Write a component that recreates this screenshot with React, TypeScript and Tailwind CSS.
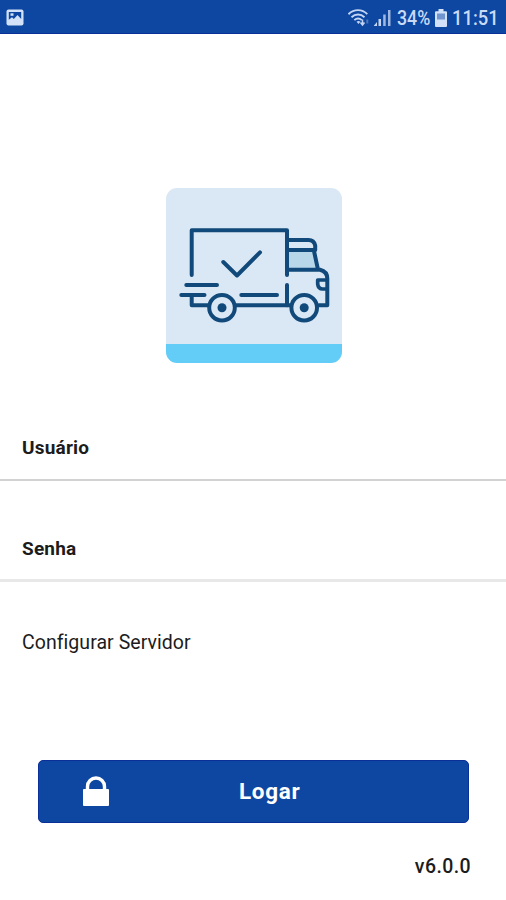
function PictureIcon() {
  return (
    <svg width="18" height="17" viewBox="0 0 18 17" fill="none">
      <rect x="0.5" y="0.5" width="17" height="16" rx="2" fill="#d3e1f8" />
      <path d="M2.8 3h12.400v7l-3.700-4-3.700 4L6 8.300l-3.200 2.500z" fill="#0d47a1" />
      <rect x="4.5" y="4.3" width="3" height="2.5" fill="#d3e1f8" />
    </svg>
  );
}

function WifiIcon() {
  return (
    <svg width="24" height="20" viewBox="0 0 24 20" fill="none" stroke="#c3d5f3" strokeWidth="1.9">
      <path d="M0.5 6.200C6 .8 14 .8 19.300 6.200" />
      <path d="M3.5 9.200c3.800-3.600 9.200-3.600 13 0" />
      <path d="M6.3 12.100c2.300-2.100 5.200-2.100 7.500 0" />
      <path d="M8.5 13.800c1.300-1.100 2.700-1.100 4 0l-2 2.200z" fill="#c3d5f3" stroke="none" />
      <path d="M14.5 11.500v5M12.500 14.500l2 2.500 2-2.500" strokeWidth="1.5" />
      <path d="M19.3 15.500v-4" strokeWidth="2" opacity=".35" />
    </svg>
  );
}

function SignalIcon() {
  return (
    <svg width="18" height="18" viewBox="0 0 18 18" fill="#c3d5f3">
      <path d="M-.5 17L3 13v4z" />
      <rect x="4.5" y="10" width="2.5" height="7" />
      <rect x="9.2" y="5.5" width="2.5" height="11.5" opacity=".8" />
      <rect x="14" y="1" width="2.5" height="16" opacity=".8" />
    </svg>
  );
}

function BatteryIcon() {
  return (
    <svg width="12" height="18" viewBox="0 0 12 18">
      <path d="M3.5 0h5v2.200H11a1 1 0 0 1 1 1V17a1 1 0 0 1-1 1H1a1 1 0 0 1-1-1V3.200a1 1 0 0 1 1-1h2.500z" fill="#d3e1f8" />
      <rect x="2" y="4.5" width="8" height="6" fill="#6f94cf" />
    </svg>
  );
}

function TruckIcon() {
  return (
    <svg
      width="176"
      height="175"
      viewBox="0 0 176 175"
      fill="none"
      stroke="#114a7a"
      strokeWidth="4"
      strokeLinecap="round"
      strokeLinejoin="round"
    >
      {/* cab */}
      <path d="M121 62h27l4 19.700h-31z" fill="#b8d8ea" stroke="none" />
      <path d="M121 52h21.500q5.500 0 6.700 5.500V62H121" />
      <path d="M148 63l4 18.700M121 81.700h33q7.300 1.800 7.300 8.800v26.800H153" />
      <path d="M161 92h-9.300v4q.5 5 5 5h4.300" strokeWidth="3.7" />

      {/* cargo box */}
      <path d="M25.7 87V42.300H121V87" />
      <path d="M121 97v20.300" />
      <path d="M25.7 109v8.300H43M69 117.300h56" />
      <path d="M57.3 74L71 87.500 94 64.300" />

      {/* speed lines */}
      <path d="M20.3 97H51M15.300 107h23.200M75.300 107H111" />

      {/* wheels */}
      <circle cx="56" cy="119.700" r="12.8" />
      <circle cx="138.2" cy="119.700" r="12.8" />
      <circle cx="56" cy="119.700" r="4.5" fill="#114a7a" stroke="none" />
      <circle cx="138.2" cy="119.700" r="4.5" fill="#114a7a" stroke="none" />
    </svg>
  );
}

function LockIcon() {
  return (
    <svg width="28" height="32" viewBox="0 0 28 32">
      <path d="M5.5 14v-3.500a8.500 8.500 0 0 1 17 0V14" fill="none" stroke="#fff" strokeWidth="3.4" />
      <rect x="1" y="13" width="26" height="17" rx="1" fill="#fff" />
    </svg>
  );
}

export default function App() {
  return (
    <div className="flex h-[900px] w-[506px] flex-col bg-white font-['Roboto',sans-serif] text-[#1c1c1c]">
      <header className="flex h-[34px] shrink-0 items-center border-b border-[#0a2f96] bg-[#0d47a1] pt-[2px] pr-[8px] pl-[6px] text-[#c9daf6]">
        <PictureIcon />
        <div className="ml-auto flex items-center">
          <WifiIcon />
          <span className="ml-[2px]">
            <SignalIcon />
          </span>
          <span className="ml-[5px] w-[34px] pt-px text-[20px] leading-[24px] whitespace-nowrap">
            <span className="inline-block origin-left scale-x-[.89] font-medium">34%</span>
          </span>
          <span className="ml-[4px]">
            <BatteryIcon />
          </span>
          <span className="ml-[5px] w-[46px] pt-px text-[20px] leading-[24px] whitespace-nowrap">
            <span className="inline-block origin-left scale-x-[.92] font-medium">11:51</span>
          </span>
        </div>
      </header>

      <main className="flex flex-1 flex-col">
        <div className="mt-[154px] ml-[166px] h-[175px] w-[176px] overflow-hidden rounded-[11px] bg-[linear-gradient(#dae8f5_156px,#63cdf7_156px)]">
          <TruckIcon />
        </div>

        <label className="mt-[73px] flex h-[45px] border-b-2 border-[#d2d2d2] pl-[22px] text-[19px] leading-[24px] font-bold tracking-[.2px]">
          Usuário
        </label>
        <label className="mt-[56px] flex h-[45px] border-b-[3px] border-[#e8e8e8] pl-[22px] text-[19px] leading-[24px] font-bold tracking-[.2px]">
          Senha
        </label>

        <a className="mt-[49px] pl-[22px] text-[19.5px] leading-[24px] tracking-[.05px]">Configurar Servidor</a>

        <button className="mt-[105px] ml-[38px] flex h-[63px] w-[431px] items-center rounded-[5px] border border-[#0a2f96] bg-[#0d47a1] text-white">
          <span className="ml-[43px]">
            <LockIcon />
          </span>
          <span className="ml-[129px] text-[22.5px] font-bold tracking-[.7px]">Logar</span>
        </button>

        <span className="mt-[32px] mr-[35px] self-end text-[19.5px] leading-[24px] font-medium tracking-[.4px]">
          v6.0.0
        </span>
      </main>
    </div>
  );
}
